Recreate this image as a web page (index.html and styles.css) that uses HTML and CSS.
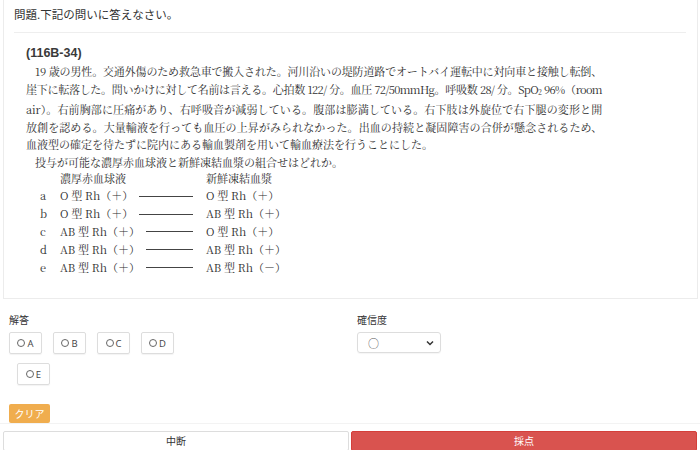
FILE: index.html
```html
<!DOCTYPE html>
<html lang="ja">
<head>
  <meta charset="UTF-8" />
  <meta name="viewport" content="width=device-width, initial-scale=1.0"/>
  <title>問題</title>
  <link rel="stylesheet" href="styles.css">
</head>
<body>
  <div class="card">
    <div class="card-title">問題.下記の問いに答えなさい。</div>
    <hr class="divider">
    <div class="question">
      <div class="q-id">(116B-34)</div>
      <div class="q-body">
        <div class="q-line just indent">19 歳の男性。交通外傷のため救急車で搬入された。河川沿いの堤防道路でオートバイ運転中に対向車と接触し転倒、</div>
        <div class="q-line just tight">崖下に転落した。問いかけに対して名前は言える。心拍数 122/ 分。血圧 72/50mmHg。呼吸数 28/ 分。SpO<span class="sub">2</span> 96%（room</div>
        <div class="q-line just">air）。右前胸部に圧痛があり、右呼吸音が減弱している。腹部は膨満している。右下肢は外旋位で右下腿の変形と開</div>
        <div class="q-line just">放創を認める。大量輸液を行っても血圧の上昇がみられなかった。出血の持続と凝固障害の合併が懸念されるため、</div>
        <div class="q-line">血液型の確定を待たずに院内にある輸血製剤を用いて輸血療法を行うことにした。</div>
        <div class="q-line indent">投与が可能な濃厚赤血球液と新鮮凍結血漿の組合せはどれか。</div>
      </div>
      <div class="q-table">
        <div class="q-row">
          <span></span>
          <span class="q-left">濃厚赤血球液</span>
          <span>新鮮凍結血漿</span>
        </div>
        <div class="q-row">
          <span>a</span>
          <span class="q-left">O 型 Rh（＋）<i class="q-rule"></i></span>
          <span>O 型 Rh（＋）</span>
        </div>
        <div class="q-row">
          <span>b</span>
          <span class="q-left">O 型 Rh（＋）<i class="q-rule"></i></span>
          <span>AB 型 Rh（＋）</span>
        </div>
        <div class="q-row">
          <span>c</span>
          <span class="q-left">AB 型 Rh（＋）<i class="q-rule"></i></span>
          <span>O 型 Rh（＋）</span>
        </div>
        <div class="q-row">
          <span>d</span>
          <span class="q-left">AB 型 Rh（＋）<i class="q-rule"></i></span>
          <span>AB 型 Rh（＋）</span>
        </div>
        <div class="q-row">
          <span>e</span>
          <span class="q-left">AB 型 Rh（＋）<i class="q-rule"></i></span>
          <span>AB 型 Rh（－）</span>
        </div>
      </div>
    </div>
  </div>

  <div class="answer-area">
    <div class="col-left">
      <div class="field-label">解答</div>
      <div class="choice-row">
        <div class="choice"><span class="radio"></span>A</div>
        <div class="choice"><span class="radio"></span>B</div>
        <div class="choice"><span class="radio"></span>C</div>
        <div class="choice"><span class="radio"></span>D</div>
      </div>
      <div class="choice-row">
        <div class="choice"><span class="radio"></span>E</div>
      </div>
    </div>
    <div class="col-right">
      <div class="field-label">確信度</div>
      <div class="select">
        <span>○</span>
        <svg width="8" height="6" viewBox="0 0 8 6"><path d="M1 1.5 L4 4.5 L7 1.5" fill="none" stroke="#333" stroke-width="1.5"/></svg>
      </div>
    </div>
  </div>

  <div class="clear-row">
    <div class="btn-clear">クリア</div>
  </div>

  <div class="footer">
    <div class="btn btn-pause">中断</div>
    <div class="btn btn-grade">採点</div>
  </div>
</body>
</html>
```

FILE: styles.css
```css
body {
  margin: 0;
  font-family: "Noto Sans CJK JP", "Noto Sans", sans-serif;
  color: #333;
  background: #fff;
}

.card {
  margin: 0 2px 0 3px;
  padding: 0 11px 22px 10px;
  border: 1px solid #ececec;
  border-top: none;
}

.card-title {
  font-size: 11.5px;
  line-height: 18px;
  padding-top: 5px;
}

.divider {
  border: 0;
  border-top: 1px solid #eee;
  margin: 9px 0 0;
}

.question {
  padding-left: 12px;
  margin-top: 11px;
  font-family: "Noto Serif CJK JP", "Liberation Serif", serif;
  font-size: 11px;
  color: #2e2e2e;
}

.q-id {
  font-family: "Liberation Sans", "Noto Sans CJK JP", sans-serif;
  font-weight: bold;
  font-size: 12.5px;
  line-height: 19px;
  color: #3a3a3a;
}

.q-body {
  width: 576px;
  line-height: 17.6px;
}

.q-line.just {
  text-align: justify;
  text-align-last: justify;
  letter-spacing: -0.15px;
}

.q-line.tight {
  letter-spacing: -0.6px;
}

.q-line.indent {
  text-indent: 9px;
}

.sub {
  font-size: 7px;
  vertical-align: -1px;
}

.q-table {
  margin-top: -2px;
  line-height: 17.8px;
}

.q-row {
  display: grid;
  grid-template-columns: 20px 146px auto;
  padding-left: 14px;
}

.q-left {
  display: flex;
  align-items: center;
}

.q-rule {
  flex: 1;
  border-top: 1px solid #444;
  margin: 0 13px 0 6px;
}

.answer-area {
  display: flex;
  align-items: flex-start;
  padding-top: 14px;
}

.col-left {
  width: 350px;
  padding-left: 9px;
  box-sizing: border-box;
}

.col-right {
  padding-left: 7px;
}

.field-label {
  font-size: 10px;
  line-height: 14px;
  margin-bottom: 5px;
}

.choice-row {
  display: flex;
  gap: 11px;
}

.choice-row + .choice-row {
  margin-top: 9px;
  padding-left: 8px;
}

.choice {
  width: 33px;
  height: 22px;
  box-sizing: border-box;
  border: 1px solid #ddd;
  border-radius: 2px;
  box-shadow: 0 1px 1px rgba(0, 0, 0, 0.05);
  display: flex;
  align-items: center;
  justify-content: center;
  gap: 2px;
  font-family: "Open Sans", "Noto Sans", sans-serif;
  font-size: 9.5px;
  color: #444;
}

.radio {
  width: 6px;
  height: 6px;
  border: 1px solid #666;
  border-radius: 50%;
}

.select {
  width: 84px;
  height: 21px;
  box-sizing: border-box;
  border: 1px solid #ddd;
  border-radius: 3px;
  box-shadow: 0 1px 1px rgba(0, 0, 0, 0.04);
  display: flex;
  align-items: center;
  justify-content: space-between;
  padding: 0 6px 0 10px;
  font-size: 11px;
  color: #555;
}

.clear-row {
  padding-left: 9px;
  margin-top: 19px;
}

.btn-clear {
  width: 41px;
  height: 19px;
  line-height: 19px;
  background: #f0ad4e;
  color: #fff;
  font-size: 10px;
  text-align: center;
  border-radius: 2px;
}

.footer {
  display: flex;
  gap: 2px;
  padding: 7px 3px 1px;
  border-top: 1px solid #f3f3f3;
}

.btn {
  flex: 1;
  height: 20px;
  box-sizing: border-box;
  font-size: 10px;
  line-height: 18px;
  text-align: center;
  border-radius: 2px;
}

.btn-pause {
  border: 1px solid #ddd;
  background: #fff;
  color: #333;
}

.btn-grade {
  border: 1px solid #d43f3a;
  background: #d9534f;
  color: #fff;
}
```
